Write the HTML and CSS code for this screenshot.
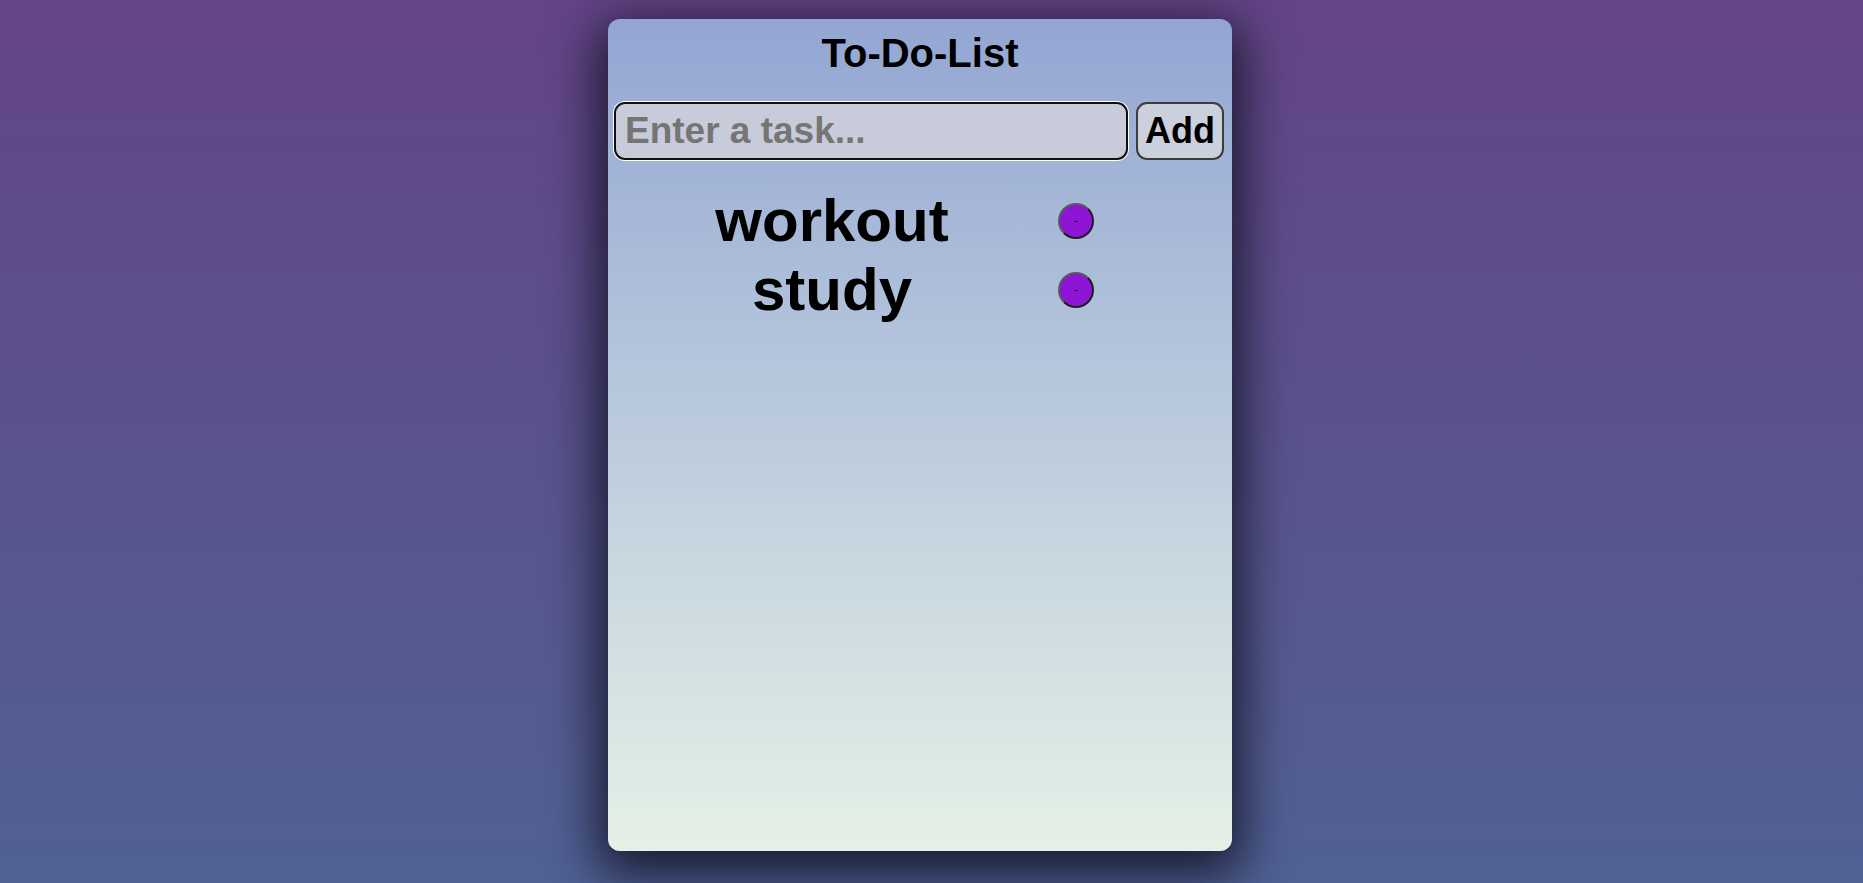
FILE: index.html
```html
<!DOCTYPE html>
<html lang="en">
<head>
<meta charset="utf-8">
<title>To-Do-List</title>
<link rel="stylesheet" href="styles.css">
</head>
<body>
<div class="page">
  <main class="card">
    <h1 class="title">To-Do-List</h1>
    <div class="entry">
      <input class="task-input" type="text" placeholder="Enter a task...">
      <button class="add-btn" type="button">Add</button>
    </div>
    <ul class="tasks">
      <li class="task"><span class="task-text">workout</span><button class="del-btn" type="button">-</button></li>
      <li class="task"><span class="task-text">study</span><button class="del-btn" type="button">-</button></li>
    </ul>
  </main>
</div>
</body>
</html>
```
FILE: styles.css
```css
html, body {
  margin: 0;
  padding: 0;
  height: 100%;
}
body {
  background: linear-gradient(#644486, #506194);
  font-family: "Liberation Sans", Arial, sans-serif;
  overflow: hidden;
}
.page {
  display: flex;
  justify-content: center;
  padding: 19px 23px 0 0;
}
.card {
  width: 624px;
  height: 832px;
  box-sizing: border-box;
  padding: 11px 8px 0 6px;
  border-radius: 12px;
  background: linear-gradient(#93a6d3, #e5f1e7);
  box-shadow: 0 14px 50px 10px rgba(10, 12, 28, 0.82);
  display: flex;
  flex-direction: column;
}
.title {
  margin: 0;
  font-size: 40px;
  line-height: 46px;
  font-weight: bold;
  text-align: center;
  color: #000;
  padding-left: 2px;
}
.entry {
  margin-top: 26px;
  display: flex;
  align-items: center;
  gap: 8px;
}
.task-input {
  flex: 1;
  min-width: 0;
  height: 58px;
  box-sizing: border-box;
  margin: 0;
  padding: 0 9px;
  border: 2px solid #101010;
  border-radius: 11px;
  box-shadow: 0 0 0 1px #fff;
  background: #c8ccda;
  font-family: "Liberation Sans", Arial, sans-serif;
  font-size: 37px;
  font-weight: bold;
  color: #000;
  outline: none;
}
.task-input::placeholder {
  color: #757575;
  opacity: 1;
}
.add-btn {
  width: 88px;
  height: 58px;
  box-sizing: border-box;
  margin: 0;
  padding: 0 5px;
  border: 2px solid #3c3c3c;
  border-radius: 11px;
  background: #cbd0dd;
  font-family: "Liberation Sans", Arial, sans-serif;
  font-size: 36px;
  font-weight: bold;
  color: #000;
}
.tasks {
  list-style: none;
  margin: 26px 0 0;
  padding: 0 0 0 34px;
}
.task {
  display: flex;
  align-items: center;
  height: 69px;
}
.task-text {
  width: 368px;
  text-align: center;
  font-size: 60px;
  line-height: 69px;
  font-weight: bold;
  color: #000;
}
.del-btn {
  width: 36px;
  height: 36px;
  margin: 0 0 0 42px;
  padding: 0;
  box-sizing: border-box;
  border-radius: 50%;
  border: 2px solid;
  border-color: #5a5a5a #1c1c1c #1c1c1c #5a5a5a;
  background: #8e14d6;
  font-family: "Liberation Sans", Arial, sans-serif;
  font-size: 11px;
  line-height: 1;
  color: #000;
}
```
